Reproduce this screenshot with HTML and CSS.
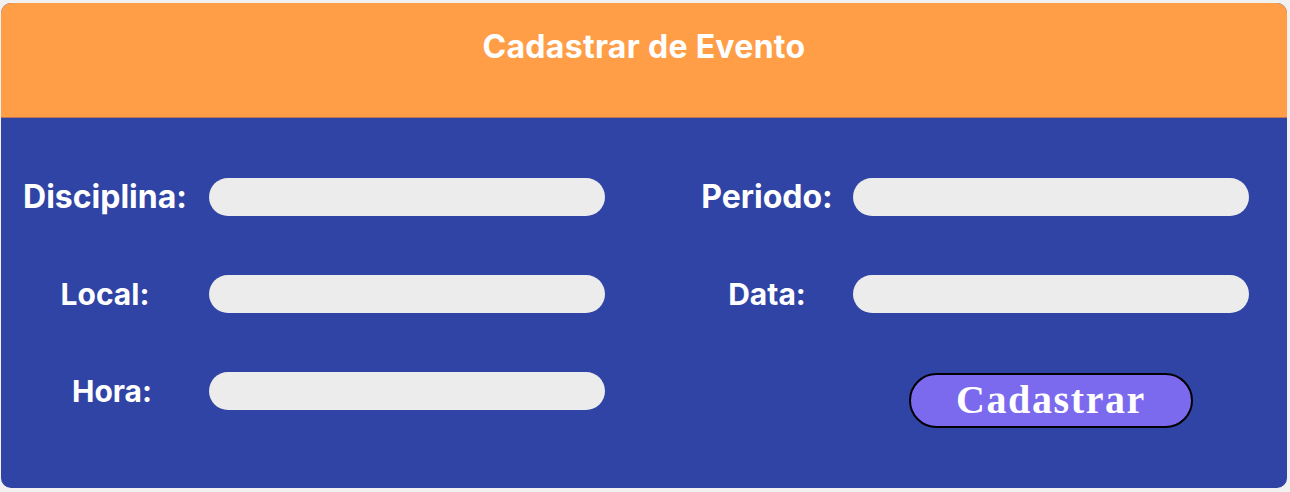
FILE: index.html
```html
<!DOCTYPE html>
<html lang="pt">
<head>
<meta charset="utf-8">
<title>Cadastrar de Evento</title>
<link rel="stylesheet" href="styles.css">
</head>
<body>
<div class="card">
  <header class="card-head">
    <h1 class="title">Cadastrar de Evento</h1>
  </header>
  <form class="form">
    <label class="label" for="disciplina">Disciplina:</label>
    <input class="field" id="disciplina" type="text">
    <span></span>
    <label class="label" for="periodo">Periodo:</label>
    <input class="field" id="periodo" type="text">

    <label class="label label-sm" for="local">Local:</label>
    <input class="field" id="local" type="text">
    <span></span>
    <label class="label label-sm" for="data">Data:</label>
    <input class="field" id="data" type="text">

    <label class="label label-sm label-hora" for="hora">Hora:</label>
    <input class="field" id="hora" type="text">
    <span></span>
    <span></span>
    <div class="btn-cell"><button class="btn" type="button">Cadastrar</button></div>
  </form>
</div>
</body>
</html>
```

FILE: styles.css
```css
html, body {
  margin: 0;
  background: #f1f1f1;
}
body {
  padding: 3px 3px 4px 1px;
  font-family: Inter, "Liberation Sans", sans-serif;
}
.card {
  width: 1286px;
  height: 485px;
  border-radius: 10px;
  overflow: hidden;
  background: #3044a5;
  display: flex;
  flex-direction: column;
}
.card-head {
  height: 114px;
  flex-shrink: 0;
  background: #ff9e47;
  border-bottom: 1px solid #b8755a;
  display: flex;
  justify-content: center;
}
.title {
  margin: 0;
  padding-top: 24px;
  font-size: 32px;
  line-height: 39px;
  font-weight: 700;
  color: #ffffff;
  letter-spacing: 0.3px;
}
.form {
  display: grid;
  grid-template-columns: 208px 396px 76px 172px 396px;
  grid-auto-rows: 38px;
  row-gap: 59px;
  padding-top: 60px;
  align-items: center;
}
.label {
  text-align: center;
  color: #ffffff;
  font-size: 32px;
  font-weight: 700;
  line-height: 38px;
}
.label-sm {
  font-size: 30px;
}
.label-hora {
  padding-left: 14px;
}
.field {
  height: 38px;
  box-sizing: border-box;
  border: none;
  border-radius: 19px;
  background: #ececec;
  outline: none;
  padding: 0 16px;
}
.btn-cell {
  display: flex;
  justify-content: center;
  align-self: start;
  padding-top: 1px;
}
.btn {
  width: 284px;
  height: 55px;
  box-sizing: border-box;
  border: 2px solid #000000;
  border-radius: 28px;
  background: #7b6aee;
  color: #ffffff;
  font-family: "Liberation Serif", "Times New Roman", serif;
  font-weight: 700;
  font-size: 40px;
  letter-spacing: 1.6px;
  line-height: 1;
  padding: 0 0 2px;
}
```
